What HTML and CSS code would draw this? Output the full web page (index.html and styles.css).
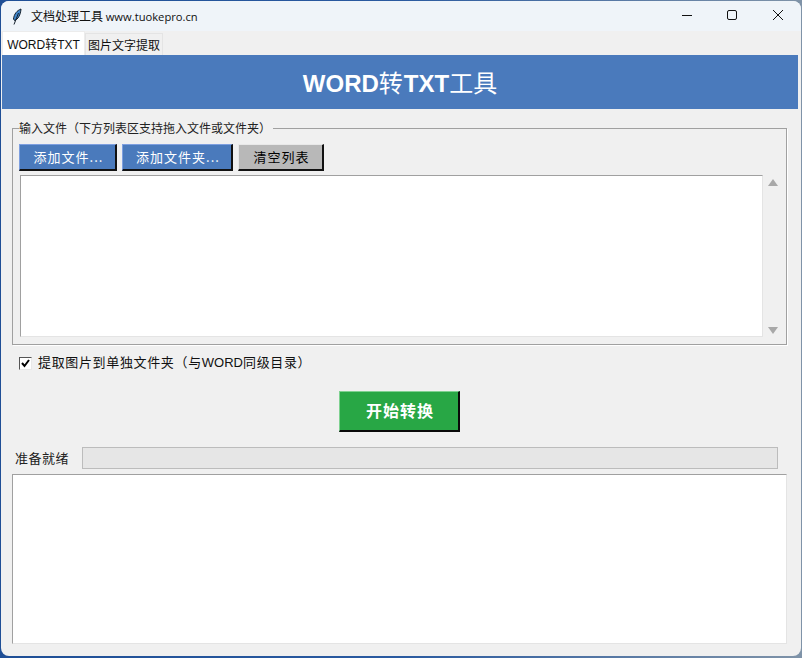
FILE: index.html
```html
<!DOCTYPE html>
<html lang="zh">
<head>
<meta charset="utf-8">
<title>文档处理工具 www.tuokepro.cn</title>
<link rel="stylesheet" href="styles.css">
</head>
<body>
<div class="window">
  <div class="titlebar">
    <svg class="app-icon" width="16" height="18" viewBox="0 0 16 18"><path d="M10 1 C6 2.500 3 6 2.500 11 L3.500 12.500 C7 11.500 9.500 7 10 1 Z" fill="#3f86cc" stroke="#15202c" stroke-width="1"/><path d="M7.500 5 L3 16.500" stroke="#15202c" stroke-width="1" fill="none"/></svg>
    <span class="title-text">文档处理工具 <span class="title-latin">www.tuokepro.cn</span></span>
    <div class="win-controls">
      <svg class="win-btn" width="46" height="30" viewBox="0 0 46 30"><path d="M19 14.500 H29" stroke="#111" stroke-width="1"/></svg>
      <svg class="win-btn" width="46" height="30" viewBox="0 0 46 30"><rect x="18.500" y="9.500" width="9" height="9" rx="1.500" fill="none" stroke="#111" stroke-width="1"/></svg>
      <svg class="win-btn" width="46" height="30" viewBox="0 0 46 30"><path d="M18 9 L28 19 M28 9 L18 19" stroke="#111" stroke-width="1" fill="none"/></svg>
    </div>
  </div>
  <div class="tabs">
    <div class="tab tab-active">WORD转TXT</div>
    <div class="tab">图片文字提取</div>
  </div>
  <div class="banner">WORD<span class="banner-thin banner-gap">转</span>TXT<span class="banner-thin">工具</span></div>
  <fieldset class="group">
    <legend class="group-legend">输入文件（下方列表区支持拖入文件或文件夹）</legend>
    <div class="btn-row">
      <div class="btn btn-blue btn-file">添加文件...</div>
      <div class="btn btn-blue btn-folder">添加文件夹...</div>
      <div class="btn btn-gray">清空列表</div>
    </div>
    <div class="list-row">
      <div class="listbox"></div>
      <div class="scrollbar">
        <svg width="10" height="8" viewBox="0 0 10 8"><path d="M5 0 L10 7 H0 Z" fill="#a8a8a8"/></svg>
        <svg width="10" height="8" viewBox="0 0 10 8"><path d="M0 1 H10 L5 8 Z" fill="#a8a8a8"/></svg>
      </div>
    </div>
  </fieldset>
  <label class="check-row">
    <span class="checkbox"><svg width="9" height="9" viewBox="0 0 9 9"><path d="M1 4 L3.500 7 L8 1" stroke="#000" stroke-width="2" fill="none"/></svg></span>
    <span class="check-text">提取图片到单独文件夹（与<span class="check-latin">WORD</span>同级目录）</span>
  </label>
  <div class="start-row"><div class="btn-start">开始转换</div></div>
  <div class="status-row">
    <span class="status-label">准备就绪</span>
    <div class="progress"></div>
  </div>
  <div class="log"></div>
</div>
</body>
</html>
```
FILE: styles.css
```css
* { box-sizing: border-box; }
html, body { margin: 0; height: 658px; overflow: hidden; }
body {
  background: linear-gradient(90deg, #1f4f96 0, #2a5aa0 50%, #7f93a8 100%);
  padding: 1px 1px 2px 1px;
  font-family: "Noto Sans CJK SC", "Liberation Sans", sans-serif;
  color: #111;
}
.window {
  width: 800px;
  height: 655px;
  background: #f0f0f0;
  border-radius: 8px;
  overflow: hidden;
  display: flex;
  flex-direction: column;
}
.titlebar {
  height: 30px;
  flex: none;
  background: #eff4f9;
  display: flex;
  align-items: center;
  padding-left: 10px;
}
.app-icon { flex: none; margin-top: 1px; }
.title-text { margin-left: 4px; font-size: 12px; line-height: 30px; white-space: nowrap; }
.title-latin { font-family: "Open Sans", "Liberation Sans", sans-serif; font-size: 11.200px; }
.win-controls { margin-left: auto; display: flex; }
.win-btn { display: block; }
.tabs {
  height: 24px;
  flex: none;
  display: flex;
  align-items: flex-end;
  padding-left: 1px;
}
.tab {
  height: 22px;
  width: 78px;
  font-family: "Liberation Sans", "Noto Sans CJK SC", sans-serif;
  font-size: 12px;
  line-height: 24px;
  text-align: center;
  background: #f0f0f0;
  border: 1px solid #e4e4e4;
  border-bottom: 0;
  white-space: nowrap;
}
.tab-active {
  height: 24px;
  width: 83px;
  line-height: 26px;
  background: #fff;
  border-color: #ececec;
}
.banner {
  flex: none;
  height: 54px;
  margin: 0 3px 0 1px;
  background: #4a7abc;
  color: #fff;
  font: bold 24px/54px "Liberation Sans", "Noto Sans CJK SC", sans-serif;
  text-align: center;
}
.banner-thin { font-family: "Noto Sans CJK SC", sans-serif; font-weight: 400; }
.banner-gap { margin-right: 1px; }
.group {
  flex: none;
  height: 225px;
  width: 775px;
  margin: 11px 0 0 11px;
  padding: 0 0 0 6px;
  min-width: 0;
  border: 1px solid #a0a0a0;
  box-shadow: 1px 1px 0 #fff;
  border-radius: 0;
}
.group-legend {
  padding: 0 2px 0 0;
  margin-left: 0;
  font-size: 12px;
  line-height: 16px;
  color: #222;
}
.btn-row { display: flex; gap: 5px; margin-top: 8px; height: 27px; }
.btn {
  height: 27px;
  font-size: 13px;
  line-height: 23px;
  text-align: center;
  text-indent: 2px;
  letter-spacing: 1px;
  border-style: solid;
  border-width: 1px 2px 2px 1px;
}
.btn-blue { background: #4a7abc; color: #fff; border-color: #7d9fe0 #111 #111 #7d9fe0; }
.btn-file { width: 98px; }
.btn-folder { width: 111px; }
.btn-gray { width: 86px; background: #b8b8b8; color: #000; border-color: #e8e8e8 #111 #111 #e8e8e8; }
.list-row { display: flex; margin-top: 4px; padding-left: 1px; height: 162px; }
.listbox {
  flex: none;
  width: 743px;
  background: #fff;
  border-style: solid;
  border-width: 1px;
  border-color: #a0a0a0 #e4e4e4 #e4e4e4 #a0a0a0;
}
.scrollbar {
  flex: none;
  width: 20px;
  display: flex;
  flex-direction: column;
  justify-content: space-between;
  align-items: center;
  padding: 4px 0 3px;
}
.scrollbar svg { display: block; }
.check-row { flex: none; display: flex; align-items: center; height: 20px; margin: 8px 0 0 18px; }
.checkbox {
  width: 13px;
  height: 13px;
  flex: none;
  background: #fff;
  border: 1px solid #555;
  border-right-color: #e8e8e8;
  border-bottom-color: #e8e8e8;
  display: flex;
  align-items: center;
  justify-content: center;
}
.checkbox svg { display: block; }
.check-text { margin: -3px 0 0 6px; font-size: 13px; letter-spacing: 0.650px; white-space: nowrap; }
.check-latin { font-family: "Liberation Sans", sans-serif; letter-spacing: 0; }
.start-row { flex: none; display: flex; justify-content: center; margin-top: 18px; padding-right: 3px; }
.btn-start {
  width: 121px;
  height: 41px;
  background: #28a745;
  color: #fff;
  font-family: "Noto Sans CJK SC", sans-serif;
  font-size: 16px;
  font-weight: 700;
  line-height: 36px;
  text-align: center;
  text-indent: 2px;
  letter-spacing: 1px;
  border-style: solid;
  border-width: 1px 2px 2px 1px;
  border-color: #7fd191 #0a0a0a #0a0a0a #7fd191;
}
.status-row { flex: none; display: flex; align-items: center; height: 22px; margin-top: 15px; padding-left: 14px; }
.status-label { width: 67px; flex: none; margin-top: -2px; font-size: 13px; letter-spacing: 0.500px; color: #222; }
.progress { width: 696px; height: 22px; background: #e6e6e6; border: 1px solid #bcbcbc; }
.log {
  flex: none;
  width: 775px;
  height: 170px;
  margin: 5px 0 0 11px;
  background: #fff;
  border-style: solid;
  border-width: 1px;
  border-color: #a0a0a0 #e4e4e4 #e4e4e4 #a0a0a0;
}
```
